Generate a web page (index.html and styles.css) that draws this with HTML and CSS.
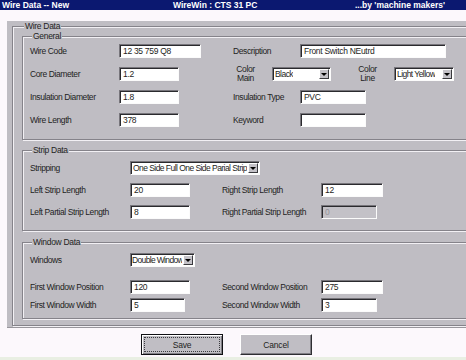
FILE: index.html
```html
<!DOCTYPE html>
<html lang="en">
<head>
    <meta charset="UTF-8">
    <meta name="viewport" content="width=device-width, initial-scale=1.0">
    <title>Wire Data -- New</title>
    <link rel="stylesheet" href="styles.css">
</head>
<body>
    <div class="titlebar">
        <span class="t-left">Wire Data -- New</span>
        <span class="t-mid">WireWin : CTS 31 PC</span>
        <span class="t-right">...by 'machine makers'</span>
    </div>

    <div class="panel">
        <fieldset class="group outer">
            <legend>Wire Data</legend>

            <fieldset class="group general">
                <legend>General</legend>
                <div class="row">
                    <span class="lbl">Wire Code</span>
                    <div class="cell"><div class="inp w82">12 35 759  Q8</div></div>
                    <span class="lbl2">Description</span>
                    <div class="inp w146">Front Switch NEutrd</div>
                </div>
                <div class="row">
                    <span class="lbl">Core Diameter</span>
                    <div class="cell"><div class="inp w60">1.2</div></div>
                    <div class="color-lbl"><span>Color</span><span>Main</span></div>
                    <div class="inp combo w59"><span>Black</span><span class="arrow"></span></div>
                    <div class="color-lbl second"><span>Color</span><span>Line</span></div>
                    <div class="inp combo w60"><span>Light Yellow</span><span class="arrow"></span></div>
                </div>
                <div class="row">
                    <span class="lbl">Insulation Diameter</span>
                    <div class="cell"><div class="inp w60">1.8</div></div>
                    <span class="lbl2">Insulation Type</span>
                    <div class="inp w66">PVC</div>
                </div>
                <div class="row">
                    <span class="lbl">Wire Length</span>
                    <div class="cell"><div class="inp w60">378</div></div>
                    <span class="lbl2">Keyword</span>
                    <div class="inp w66"></div>
                </div>
            </fieldset>

            <fieldset class="group strip">
                <legend>Strip Data</legend>
                <div class="row">
                    <span class="lbl">Stripping</span>
                    <div class="inp combo w130"><span>One Side Full One Side Parial Strip</span><span class="arrow"></span></div>
                </div>
                <div class="row">
                    <span class="lbl">Left Strip Length</span>
                    <div class="cell"><div class="inp w60">20</div></div>
                    <span class="lbl2">Right Strip Length</span>
                    <div class="inp w62">12</div>
                </div>
                <div class="row">
                    <span class="lbl">Left Partial Strip Length</span>
                    <div class="cell"><div class="inp w60">8</div></div>
                    <span class="lbl2">Right Partial Strip Length</span>
                    <div class="inp w56 disabled">0</div>
                </div>
            </fieldset>

            <fieldset class="group window">
                <legend>Window Data</legend>
                <div class="row">
                    <span class="lbl">Windows</span>
                    <div class="inp combo w65 snug"><span>Double Window</span><span class="arrow"></span></div>
                </div>
                <div class="row wide">
                    <span class="lbl">First Window Position</span>
                    <div class="cell"><div class="inp w60">120</div></div>
                    <span class="lbl2">Second Window Position</span>
                    <div class="inp w62">275</div>
                </div>
                <div class="row close">
                    <span class="lbl">First Window Width</span>
                    <div class="cell"><div class="inp w55">5</div></div>
                    <span class="lbl2">Second Window Width</span>
                    <div class="inp w56">3</div>
                </div>
            </fieldset>
        </fieldset>
    </div>

    <div class="actions">
        <button class="btn default save">Save</button>
        <button class="btn cancel">Cancel</button>
    </div>
    <div class="bottom-strip"></div>
</body>
</html>
```

FILE: styles.css
```css
body {
    margin: 0;
    width: 466px;
    height: 360px;
    overflow: hidden;
    background-color: #fcf8fc;
    font-family: "Liberation Sans", Arial, sans-serif;
    font-size: 8.5px;
    color: #1e1e22;
}

.titlebar {
    display: flex;
    height: 10px;
    padding-left: 2px;
    background-color: #0b1870;
    color: #fff;
    font-weight: bold;
    line-height: 10px;
    white-space: nowrap;
}

.t-left { width: 171px; }
.t-mid { width: 182px; }

/* gray dialog body, frames run off the right edge */
.panel {
    box-sizing: border-box;
    width: 459px;
    height: 307px;
    margin: 11px 0 0 7px;
    padding-left: 5px;
    background-color: #bfbdc3;
    border-bottom: 1px solid #98969c;
    overflow: hidden;
}

/* etched group frames */
.group {
    margin: 0;
    padding: 0;
    min-width: 0;
    border: 1px solid #85838a;
    box-shadow: inset 1px 1px 0 #f2f0f4, 1px 1px 0 #f2f0f4;
}

legend {
    margin-left: 2px;
    padding: 0 1px;
    line-height: 10px;
    background-color: #bfbdc3;
    letter-spacing: -0.3px;
}

.outer {
    width: 470px;
    padding: 0 0 6px 9px;
}

.general { padding: 3px 0 12px 7px; }

.strip {
    margin-top: 5px;
    padding: 6px 0 11px 7px;
}

.window {
    margin-top: 6px;
    padding: 6px 0 6px 7px;
}

.row {
    display: flex;
    align-items: center;
    height: 14px;
}

.row + .row { margin-top: 9px; }
.strip .row + .row { margin-top: 8px; }
.window .row.wide { margin-top: 13px; }
.window .row.close { margin-top: 4px; }

.lbl, .lbl2 {
    white-space: nowrap;
    letter-spacing: -0.4px;
}

.general .lbl { width: 89px; }
.general .cell { width: 114px; }
.general .lbl2 { width: 67px; }

.strip .lbl, .window .lbl { width: 100px; }
.strip .cell, .window .cell { width: 92px; }
.strip .lbl2, .window .lbl2 { width: 99px; }

.color-lbl {
    display: flex;
    flex-direction: column;
    align-items: center;
    width: 25px;
    margin-right: 14px;
    line-height: 9px;
    letter-spacing: -0.4px;
}

.color-lbl.second { margin-left: 24px; }

/* sunken edit boxes */
.inp {
    box-sizing: border-box;
    height: 14px;
    padding: 1px 0 0 3px;
    background-color: #fff;
    border: 1px solid;
    border-color: #77757b #fbfbfb #fbfbfb #77757b;
    box-shadow: inset 1px 1px 0 #2a2a2e;
    line-height: 11px;
    white-space: nowrap;
    overflow: hidden;
    letter-spacing: -0.3px;
}

.inp.disabled {
    background-color: #c3c1c7;
    color: #96949a;
}

.w55 { width: 55px; }
.w56 { width: 56px; }
.w59 { width: 59px; }
.w60 { width: 60px; }
.w62 { width: 62px; }
.w65 { width: 65px; }
.w66 { width: 66px; }
.w82 { width: 82px; }
.w130 { width: 130px; }
.w146 { width: 146px; }

.combo {
    display: flex;
    align-items: center;
    justify-content: space-between;
    padding: 0 1px 0 2px;
    letter-spacing: -0.55px;
}

.combo.snug {
    padding-left: 1px;
    letter-spacing: -0.65px;
}

.combo span:first-child {
    overflow: hidden;
}

.arrow {
    position: relative;
    flex: none;
    box-sizing: border-box;
    width: 10px;
    height: 10px;
    margin-left: 1px;
    background-color: #c4c2c8;
    border: 1px solid;
    border-color: #fff #3a3a3e #3a3a3e #fff;
}

.arrow::after {
    content: "";
    position: absolute;
    left: 1px;
    top: 3px;
    border-left: 3px solid transparent;
    border-right: 3px solid transparent;
    border-top: 3px solid #000;
}

.actions {
    display: flex;
    gap: 17px;
    padding-left: 141px;
    margin-top: 6px;
}

.btn {
    box-sizing: border-box;
    height: 21px;
    padding: 0;
    font-family: inherit;
    font-size: 8.5px;
    color: #1e1e22;
    background-color: #c0bec4;
    border: 1px solid;
    border-color: #fff #2e2e32 #2e2e32 #fff;
    box-shadow: inset -1px -1px 0 #807e84;
    letter-spacing: -0.2px;
}

.save { width: 82px; }
.cancel { width: 72px; }

.btn.default {
    border: 1px solid #101014;
    box-shadow: inset 1px 1px 0 #fff, inset -1px -1px 0 #807e84;
    outline: 1px dotted #3a3a3e;
    outline-offset: -4px;
}

.bottom-strip {
    height: 3px;
    margin-top: 2px;
    background-color: #e9efe3;
}
```
